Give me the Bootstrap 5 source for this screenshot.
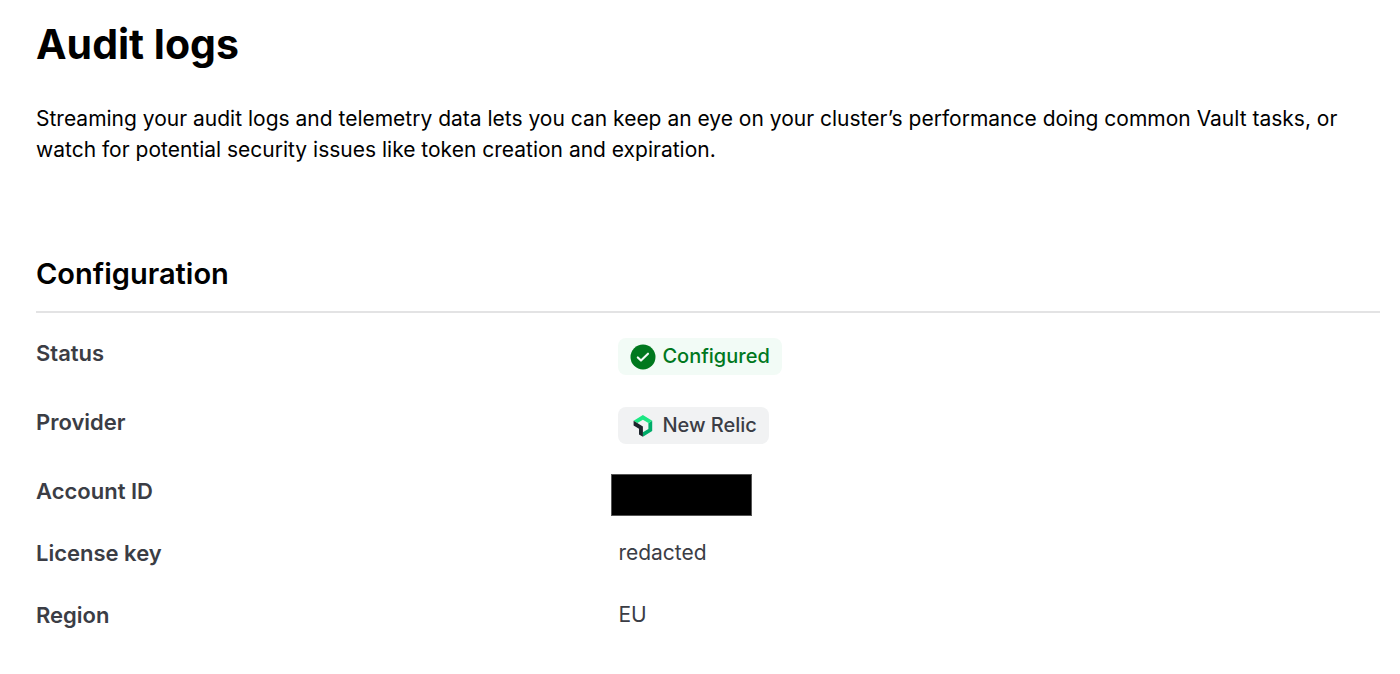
<!DOCTYPE html>
<html lang="en">
<head>
<meta charset="utf-8">
<meta name="viewport" content="width=device-width, initial-scale=1">
<title>Audit logs</title>
<link href="https://cdn.jsdelivr.net/npm/bootstrap@5.3.0/dist/css/bootstrap.min.css" rel="stylesheet">
<style>
body{font-family:Inter,"Liberation Sans",sans-serif;color:#000;background:#fff}
.page{padding:16px 20px 32px 36px}
.page-title{font-size:41px;line-height:56px;font-weight:700}
.intro{font-size:21px;line-height:31px;margin-top:31px;margin-bottom:88px}
.section-title{font-size:29px;line-height:42px;font-weight:600;padding-bottom:16px;border-bottom:2px solid #e3e3e4}
.config{gap:32px;font-size:22px;line-height:30px;color:#3b3d45;padding-top:25px}
.config-row{display:grid;grid-template-columns:13fr 17fr}
.config dt{font-weight:600}
.config dd{margin:0}
.config .config-text{font-size:21px}
.status-tag{font-size:20px;line-height:27px;font-weight:500;padding:5px 12px;gap:6px;border-radius:8px}
.tag-success{color:#00781e;background:#f2fbf6}
.tag-neutral{background:#f1f2f3}
.redaction{top:-2px;left:-7px;width:141px;height:42px;background:#000;border:1px solid #555}
</style>
</head>
<body>
<main class="page">
<h1 class="page-title mb-0">Audit logs</h1>
<p class="intro">Streaming your audit logs and telemetry data lets you can keep an eye on your cluster’s performance doing common Vault tasks, or watch for potential security issues like token creation and expiration.</p>
<h2 class="section-title mb-0">Configuration</h2>
<dl class="config d-flex flex-column mb-0">
<div class="config-row"><dt>Status</dt><dd class="d-flex"><span class="status-tag tag-success d-inline-flex align-items-center"><svg width="26" height="26" viewBox="0 0 26 26" aria-hidden="true"><circle cx="13" cy="13" r="12.5" fill="#00781e"/><path d="M7.8 13.4l3.2 3.2 7-6.9" fill="none" stroke="#f2fbf6" stroke-width="2.1" stroke-linecap="round" stroke-linejoin="round"/></svg>Configured</span></dd></div>
<div class="config-row"><dt>Provider</dt><dd class="d-flex"><span class="status-tag tag-neutral d-inline-flex align-items-center"><svg width="26" height="26" viewBox="0 0 26 26" aria-hidden="true"><path d="M18.4 10.1L22.2 7.8V18L12.9 23.8V19.2L18.4 15.9Z" fill="#00ac69"/><path d="M18.4 10.1L12.9 6.8 7.4 10.1 3.6 7.8 12.9 2.1 22.2 7.8Z" fill="#1ce783"/><path d="M3.6 7.8L12.9 13.4V23.8L9 21.4V15.7L3.6 12.4Z" fill="#1d252c"/></svg>New Relic</span></dd></div>
<div class="config-row"><dt>Account ID</dt><dd class="position-relative"><span class="redaction position-absolute"></span></dd></div>
<div class="config-row"><dt>License key</dt><dd class="config-text">redacted</dd></div>
<div class="config-row"><dt>Region</dt><dd class="config-text">EU</dd></div>
</dl>
</main>
<script src="https://cdn.jsdelivr.net/npm/bootstrap@5.3.0/dist/js/bootstrap.bundle.min.js"></script>
</body>
</html>
